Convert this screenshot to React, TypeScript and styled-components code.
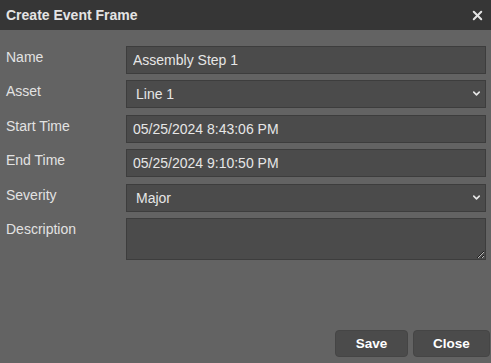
import styled, { createGlobalStyle } from "styled-components";
import { ChevronDown, X } from "lucide-react";

const GlobalStyle = createGlobalStyle`
  html, body {
    margin: 0;
    padding: 0;
    background: #636363;
  }
  * {
    box-sizing: border-box;
  }
`;

const fields = [
  { label: "Name", kind: "input", value: "Assembly Step 1" },
  { label: "Asset", kind: "select", value: "Line 1" },
  { label: "Start Time", kind: "input", value: "05/25/2024 8:43:06 PM" },
  { label: "End Time", kind: "input", value: "05/25/2024 9:10:50 PM" },
  { label: "Severity", kind: "select", value: "Major" },
  { label: "Description", kind: "textarea", value: "" },
];

const App = () => {
  return (
    <Dialog>
      <GlobalStyle />
      <TitleBar>
        <Title>Create Event Frame</Title>
        <CloseIcon>
          <X size={15} strokeWidth={3.2} />
        </CloseIcon>
      </TitleBar>

      <FormBody>
        {fields.map((field) => (
          <FieldRow key={field.label}>
            <FieldLabel>{field.label}</FieldLabel>
            {field.kind === "input" && (
              <TextInput defaultValue={field.value} />
            )}
            {field.kind === "select" && (
              <SelectWrap>
                <SelectBox defaultValue={field.value}>
                  <option>{field.value}</option>
                </SelectBox>
                <Chevron>
                  <ChevronDown size={11} strokeWidth={3.5} />
                </Chevron>
              </SelectWrap>
            )}
            {field.kind === "textarea" && <TextArea defaultValue="" />}
          </FieldRow>
        ))}
      </FormBody>

      <Footer>
        <ActionButton $width={73}>Save</ActionButton>
        <ActionButton $width={77}>Close</ActionButton>
      </Footer>
    </Dialog>
  );
};

export default App;

const Dialog = styled.div`
  width: 491px;
  height: 100vh;
  display: flex;
  flex-direction: column;
  background-color: #636363;
  font-family: "Liberation Sans", Arial, sans-serif;
  font-size: 14px;
`;

const TitleBar = styled.div`
  height: 30px;
  flex-shrink: 0;
  display: flex;
  align-items: center;
  justify-content: space-between;
  padding: 0 6px 0 6px;
  background-color: #363636;
`;

const Title = styled.span`
  color: #e4e4e4;
  font-weight: bold;
  font-size: 14px;
`;

const CloseIcon = styled.span`
  display: flex;
  color: #e4e4e4;
`;

const FormBody = styled.div`
  display: flex;
  flex-direction: column;
  gap: 6.4px;
  padding: 16px 5px 0 6px;
  flex: 1;
`;

const FieldRow = styled.div`
  display: grid;
  grid-template-columns: 120px 1fr;
  align-items: start;
`;

const FieldLabel = styled.label`
  color: #e2e2e2;
  padding-top: 3px;
  line-height: 16px;
`;

const fieldBase = `
  width: 100%;
  height: 28px;
  background-color: #4b4b4b;
  border: 1px solid #3d3d3d;
  border-radius: 0;
  color: #e6e6e6;
  font-family: "Liberation Sans", Arial, sans-serif;
  font-size: 14px;
  outline: none;
  margin: 0;
`;

const TextInput = styled.input`
  ${fieldBase}
  padding: 0 6px;
`;

const SelectWrap = styled.div`
  position: relative;
`;

const SelectBox = styled.select`
  ${fieldBase}
  appearance: none;
  padding: 0 8px 0 9px;
`;

const Chevron = styled.span`
  position: absolute;
  right: 4px;
  top: 8px;
  display: flex;
  color: #e6e6e6;
  pointer-events: none;
`;

const TextArea = styled.textarea`
  ${fieldBase}
  height: 42px;
  padding: 4px 6px;
  resize: both;
`;

const Footer = styled.div`
  display: flex;
  justify-content: flex-end;
  gap: 5px;
  padding: 0 1px 6px 0;
`;

const ActionButton = styled.button<{ $width: number }>`
  width: ${(props) => props.$width}px;
  height: 27px;
  background-color: #4b4b4b;
  border: 1px solid #454545;
  border-radius: 4px;
  color: #ffffff;
  font-family: "Liberation Sans", Arial, sans-serif;
  font-size: 13.5px;
  font-weight: bold;
  cursor: pointer;
`;
